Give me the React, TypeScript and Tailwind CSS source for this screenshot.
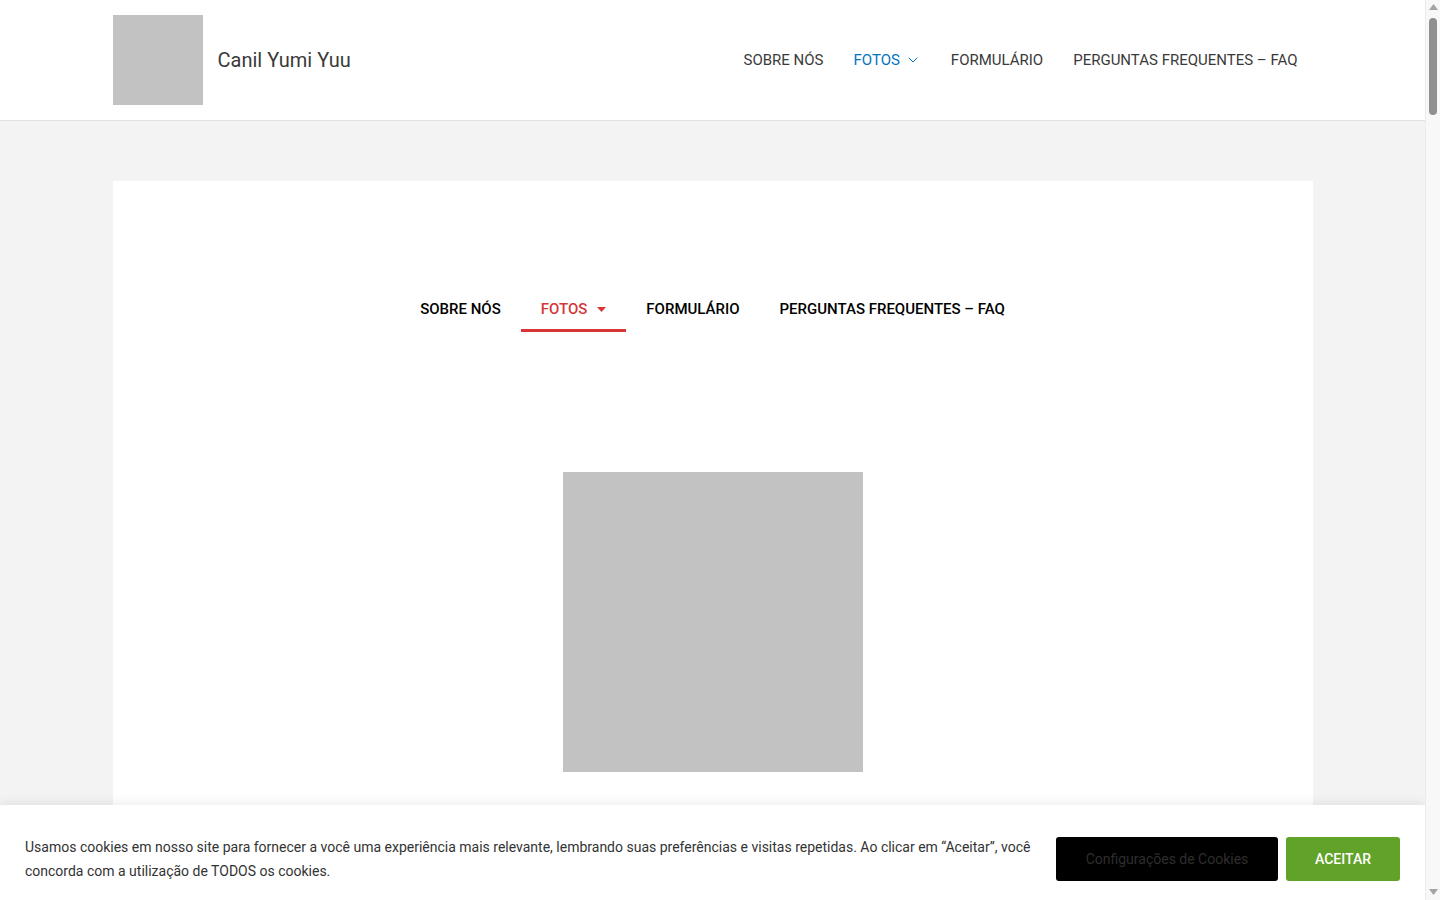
import { ChevronDown } from 'lucide-react';

const topLinks = ['SOBRE NÓS', 'FOTOS', 'FORMULÁRIO', 'PERGUNTAS FREQUENTES – FAQ'];

function Header() {
  return (
    <header className="bg-white border-b border-[#e0e0e0]">
      <div className="mx-auto w-[1200px] flex items-center justify-between py-[15px]">
        <div className="flex items-center gap-[15px]">
          <div className="w-[90px] h-[90px] bg-[#c2c2c2]" />
          <span className="text-[20px] text-[#3a3a3a] leading-none">Canil Yumi Yuu</span>
        </div>
        <nav className="flex items-center">
          {topLinks.map((l) => (
            <a
              key={l}
              className={`flex items-center px-[15px] text-[15px] ${l === 'FOTOS' ? 'text-[#0274be]' : 'text-[#3a3a3a]'}`}
            >
              {l}
              {l === 'FOTOS' && <ChevronDown className="ml-[5px] w-4 h-4 text-[#0274be]" strokeWidth={1.5} />}
            </a>
          ))}
        </nav>
      </div>
    </header>
  );
}

function CardNav() {
  return (
    <nav className="flex justify-center">
      {topLinks.map((l) => {
        const active = l === 'FOTOS';
        return (
          <a
            key={l}
            className={`flex items-center px-5 pt-[17px] pb-[10px] leading-[20px] text-[15px] font-medium border-b-[3px] ${
              active ? 'text-[#d63638] border-[#d63638]' : 'text-black border-transparent'
            }`}
          >
            {l}
            {active && (
              <svg className="ml-[10px] w-[9px] h-[5px]" viewBox="0 0 9 5">
                <path d="M0 0h9L4.5 5z" fill="#d63638" />
              </svg>
            )}
          </a>
        );
      })}
    </nav>
  );
}

function CookieBar() {
  return (
    <div className="absolute bottom-0 left-0 right-0 bg-white shadow-[0_-2px_10px_rgba(0,0,0,0.08)] flex items-center gap-[25px] px-[25px] pt-[30px] pb-[17px]">
      <p className="flex-1 text-[14px] leading-[24px] text-[#333]">
        Usamos cookies em nosso site para fornecer a você uma experiência mais relevante, lembrando suas preferências e visitas repetidas. Ao clicar em “Aceitar”, você concorda com a utilização de TODOS os cookies.
      </p>
      <div className="flex items-center gap-2">
        <button className="w-[222px] h-[44px] bg-black rounded-[3px] text-[14px] text-[#2e2e2e]">
          Configurações de Cookies
        </button>
        <button className="w-[114px] h-[44px] bg-[#61a229] rounded-[3px] text-[14px] font-medium text-white">
          ACEITAR
        </button>
      </div>
    </div>
  );
}

function ScrollRail() {
  return (
    <div className="w-[15px] h-full bg-[#f8f8f8] border-l border-[#ececec] flex flex-col items-center">
      <svg className="mt-[4px] w-[9px] h-[6px]" viewBox="0 0 9 6">
        <path d="M4.5 0L9 6H0z" fill="#a3a3a3" />
      </svg>
      <div className="mt-[8px] w-[8px] h-[97px] rounded-full bg-[#909090]" />
      <div className="flex-1" />
      <svg className="mb-[5px] w-[9px] h-[6px]" viewBox="0 0 9 6">
        <path d="M0 0h9L4.5 6z" fill="#a3a3a3" />
      </svg>
    </div>
  );
}

export default function App() {
  return (
    <div className="h-screen flex overflow-hidden" style={{ fontFamily: 'Roboto, "Liberation Sans", sans-serif' }}>
      <div className="relative flex-1 h-full overflow-hidden bg-[#f3f3f3]">
        <Header />
        <main className="pt-[60px] pb-[60px]">
          <div className="mx-auto w-[1200px] bg-white pt-[101px] pb-[200px]">
            <CardNav />
            <div className="flex justify-center mt-[140px]">
              <div className="w-[300px] h-[300px] bg-[#c2c2c2]" />
            </div>
          </div>
        </main>
        <CookieBar />
      </div>
      <ScrollRail />
    </div>
  );
}
